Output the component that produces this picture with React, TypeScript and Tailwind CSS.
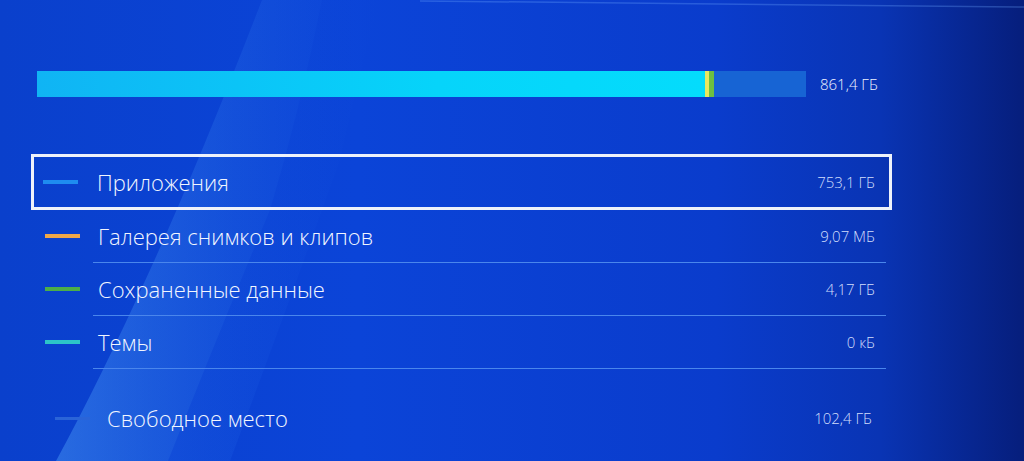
const rows = [
    { label: 'Приложения', value: '753,1 ГБ', color: 'bg-[#1e8cf0]', selected: true },
    { label: 'Галерея снимков и клипов', value: '9,07 МБ', color: 'bg-[#f0a848]' },
    { label: 'Сохраненные данные', value: '4,17 ГБ', color: 'bg-[#4cae48]' },
    { label: 'Темы', value: '0 кБ', color: 'bg-[#2cc4c8]' }
];

function Swoosh() {
    return (
        <svg
            className="absolute inset-0 pointer-events-none"
            width="1024"
            height="461"
            viewBox="0 0 1024 461"
        >
            <defs>
                <linearGradient id="band" x1="0" y1="0" x2="1" y2="0">
                    <stop offset="0" stopColor="#5ab0ff" stopOpacity="0.38" />
                    <stop offset="1" stopColor="#2f7cf0" stopOpacity="0.08" />
                </linearGradient>
                <linearGradient id="band2" x1="0" y1="0" x2="1" y2="0">
                    <stop offset="0" stopColor="#3a8cff" stopOpacity="0.16" />
                    <stop offset="1" stopColor="#1f5fe0" stopOpacity="0" />
                </linearGradient>
            </defs>
            <path
                d="M262 0 Q200 160 150 270 Q100 380 56 461 L168 461 Q220 330 270 210 Q300 110 322 0 Z"
                fill="url(#band)"
            />
            <path
                d="M322 0 Q300 110 270 210 Q220 330 168 461 L230 461 Q290 300 340 160 Q360 70 380 0 Z"
                fill="url(#band2)"
            />
            <path d="M420 1 L1024 7" stroke="#6fa8ff" strokeOpacity="0.3" strokeWidth="1.5" />
        </svg>
    );
}

export default function App() {
    return (
        <div
            className="relative w-[1024px] h-[461px] overflow-hidden bg-[linear-gradient(90deg,#0a40cc_0%,#0b44d8_35%,#0a3ccc_70%,#0934b4_86%,#061e7c_100%)]"
            style={{ fontFamily: '"Open Sans", "Noto Sans", sans-serif' }}
        >
            <Swoosh />
            <div className="relative pt-[71px] pl-[31px]">
                <div className="flex items-center ml-[6px]">
                    <div className="flex w-[769px] h-[26px]">
                        <div className="w-[668px] bg-[linear-gradient(90deg,#10b4f4,#06d4fa_60%,#04dcfc)]" />
                        <div className="w-[4px] bg-[#e8e860]" />
                        <div className="w-[5px] bg-[#6cc040]" />
                        <div className="flex-1 bg-[#1764d4]" />
                    </div>
                    <span className="ml-[14px] text-[15px] font-light text-[#eef3ff]">861,4 ГБ</span>
                </div>

                <div className="mt-[57px] w-[861px]">
                    {rows.map((r) =>
                        r.selected ? (
                            <div
                                key={r.label}
                                className="flex items-center h-[56px] border-[3px] border-[#eef2fa] pl-[9px] pr-[14px]"
                            >
                                <div className={`w-[35px] h-[4px] ${r.color}`} />
                                <span className="ml-[19px] text-[22px] font-light text-[#f2f6ff]">{r.label}</span>
                                <span className="ml-auto text-[15px] font-light text-[#d2defc]">{r.value}</span>
                            </div>
                        ) : (
                            <div key={r.label} className="flex flex-col">
                                <div className="flex items-center h-[52px] pl-[14px] pr-[17px]">
                                    <div className={`w-[35px] h-[4px] ${r.color}`} />
                                    <span className="ml-[18px] text-[22px] font-light text-[#f2f6ff]">{r.label}</span>
                                    <span className="ml-auto text-[15px] font-light text-[#d2defc]">{r.value}</span>
                                </div>
                                <div className="h-px ml-[62px] mr-[6px] bg-[#4a86ec]" />
                            </div>
                        )
                    )}
                    <div className="flex items-center h-[52px] mt-[23px] pl-[24px] pr-[20px]">
                        <div className="w-[35px] h-[3px] bg-[#2a64d8]" />
                        <span className="ml-[17px] text-[22px] font-light text-[#f2f6ff]">Свободное место</span>
                        <span className="ml-auto text-[15px] font-light text-[#d2defc]">102,4 ГБ</span>
                    </div>
                </div>
            </div>
        </div>
    );
}
